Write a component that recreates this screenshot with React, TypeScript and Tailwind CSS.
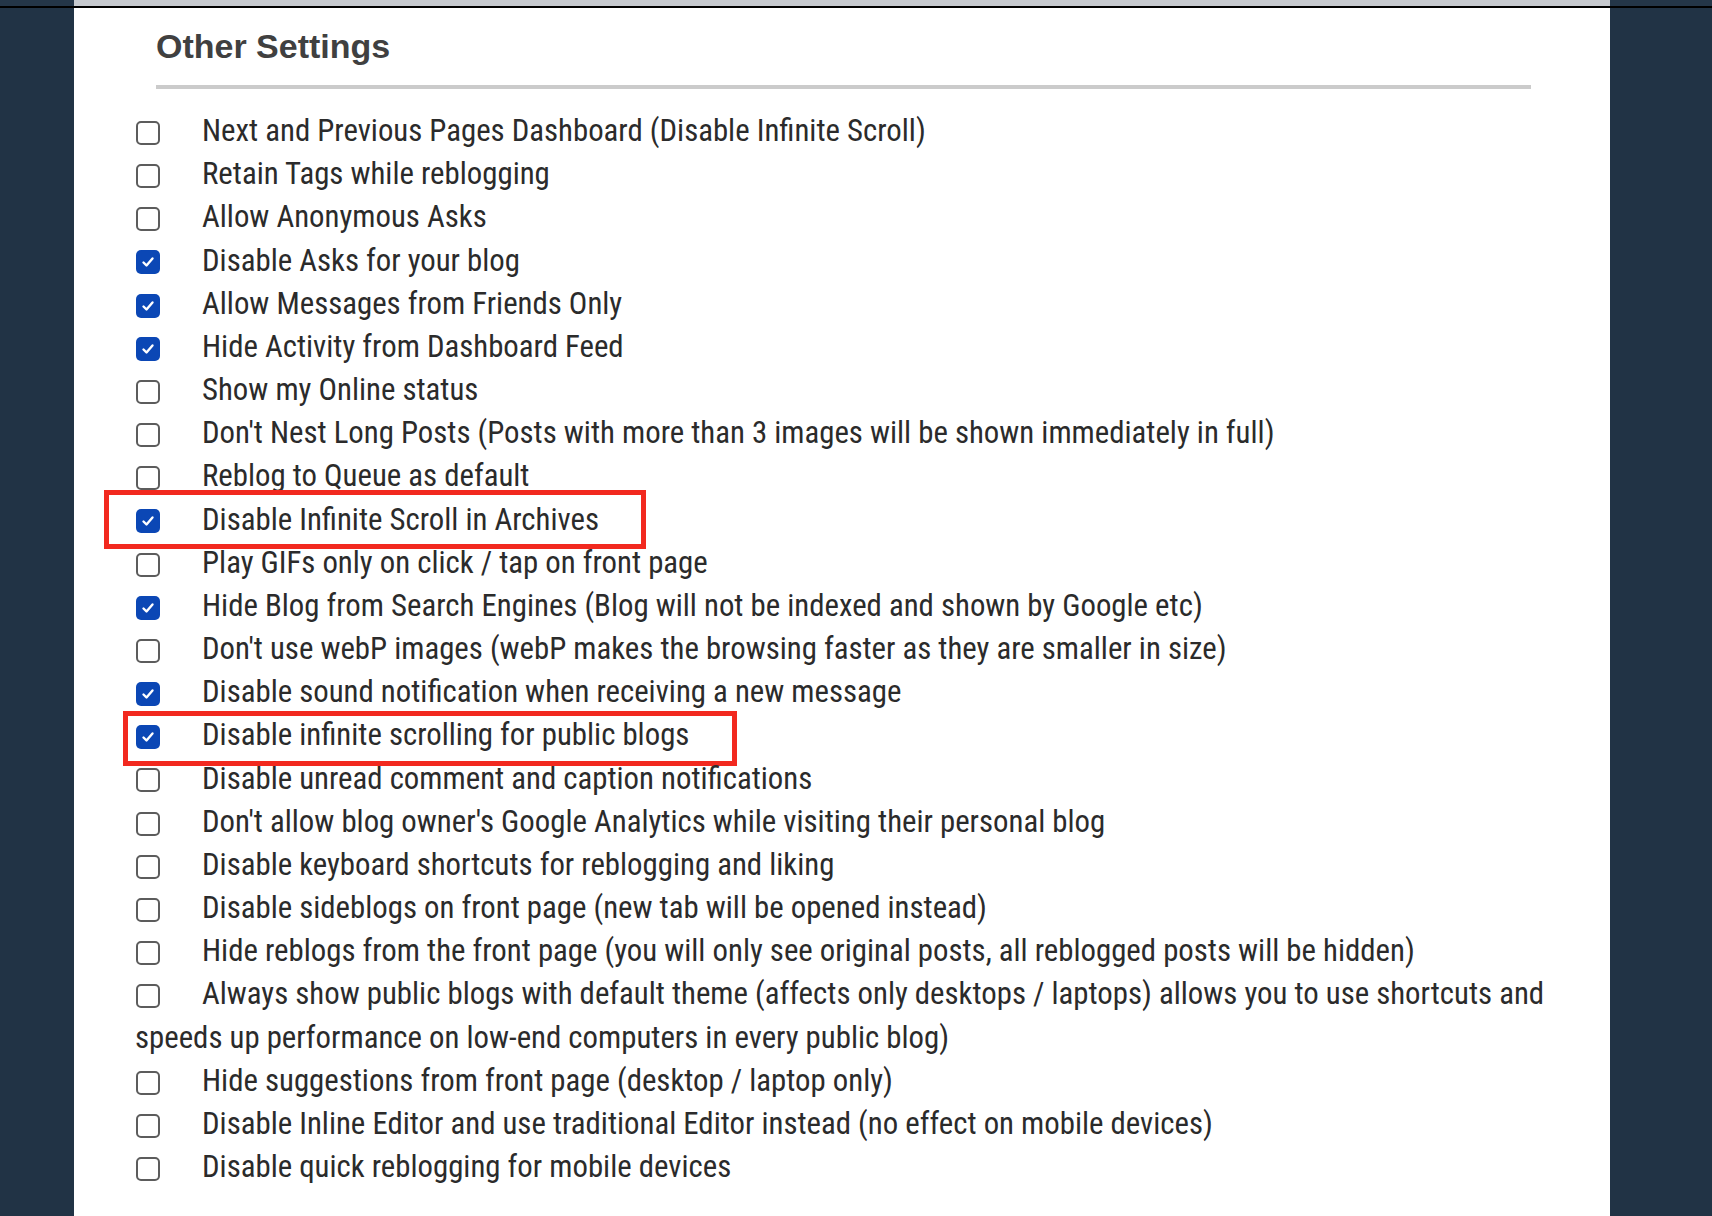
import React from 'react';

type Setting = {
  label: string;
  checked: boolean;
  // red annotation frame drawn over the row
  mark?: string;
};

const settings: Setting[] = [
  { label: 'Next and Previous Pages Dashboard (Disable Infinite Scroll)', checked: false },
  { label: 'Retain Tags while reblogging', checked: false },
  { label: 'Allow Anonymous Asks', checked: false },
  { label: 'Disable Asks for your blog', checked: true },
  { label: 'Allow Messages from Friends Only', checked: true },
  { label: 'Hide Activity from Dashboard Feed', checked: true },
  { label: 'Show my Online status', checked: false },
  { label: "Don't Nest Long Posts (Posts with more than 3 images will be shown immediately in full)", checked: false },
  { label: 'Reblog to Queue as default', checked: false },
  { label: 'Disable Infinite Scroll in Archives', checked: true, mark: 'left-[-31px] top-[-8px] w-[542px] h-[59px]' },
  { label: 'Play GIFs only on click / tap on front page', checked: false },
  { label: 'Hide Blog from Search Engines (Blog will not be indexed and shown by Google etc)', checked: true },
  { label: "Don't use webP images (webP makes the browsing faster as they are smaller in size)", checked: false },
  { label: 'Disable sound notification when receiving a new message', checked: true },
  { label: 'Disable infinite scrolling for public blogs', checked: true, mark: 'left-[-12px] top-[-2px] w-[614px] h-[55px]' },
  { label: 'Disable unread comment and caption notifications', checked: false },
  { label: "Don't allow blog owner's Google Analytics while visiting their personal blog", checked: false },
  { label: 'Disable keyboard shortcuts for reblogging and liking', checked: false },
  { label: 'Disable sideblogs on front page (new tab will be opened instead)', checked: false },
  { label: 'Hide reblogs from the front page (you will only see original posts, all reblogged posts will be hidden)', checked: false },
  {
    label:
      'Always show public blogs with default theme (affects only desktops / laptops) allows you to use shortcuts and speeds up performance on low-end computers in every public blog)',
    checked: false,
  },
  { label: 'Hide suggestions from front page (desktop / laptop only)', checked: false },
  { label: 'Disable Inline Editor and use traditional Editor instead (no effect on mobile devices)', checked: false },
  { label: 'Disable quick reblogging for mobile devices', checked: false },
];

function Box({ checked }: { checked: boolean }) {
  if (checked) {
    return (
      <span className="inline-flex items-center justify-center align-middle w-[24px] h-[24px] ml-px mr-[42px] rounded-[5px] bg-[#0b47b5]">
        <svg className="w-[16px] h-[16px]" viewBox="0 0 16 16" fill="none" stroke="white" strokeWidth={2.4} strokeLinecap="round" strokeLinejoin="round">
          <path d="M3.5 8.5l3 3 6-7" />
        </svg>
      </span>
    );
  }
  return (
    <span className="inline-block align-middle w-[24px] h-[24px] ml-px mr-[42px] rounded-[5px] border-2 border-[#5c5c5c] bg-white" />
  );
}

export default function App() {
  return (
    <div className="min-h-screen bg-[#213345]">
      {/* top strip */}
      <div className="flex h-[6px]">
        <div className="w-[74px] bg-[#243648]" />
        <div className="w-[1536px] bg-[#c6c9ce]" />
        <div className="flex-1 bg-[#243648]" />
      </div>
      <div className="h-[2px] bg-black" />

      <div className="ml-[74px] w-[1536px] min-h-[1208px] bg-white pt-[18px]">
        <div className="pl-[82px] pr-[79px]">
          <h2 className="text-[34px] leading-[40px] font-bold text-[#404040] font-['Liberation_Sans',Arial,sans-serif]">
            Other Settings
          </h2>
          <div className="mt-[19px] h-[4px] bg-[#cbcbcb]" />
        </div>

        <ul className="mt-[20px] pl-[61px] pr-[40px] text-[30.8px] leading-[43.17px] text-[#2b2b2b] font-['Roboto_Condensed','Liberation_Sans_Narrow','DejaVu_Sans_Condensed',Roboto,sans-serif] [font-stretch:condensed]">
          {settings.map((s) => (
            <li key={s.label} className="relative">
              <Box checked={s.checked} />
              {s.label}
              {s.mark && (
                <span className={`absolute border-[5px] border-[#f2291f] pointer-events-none ${s.mark}`} />
              )}
            </li>
          ))}
        </ul>
      </div>
    </div>
  );
}
